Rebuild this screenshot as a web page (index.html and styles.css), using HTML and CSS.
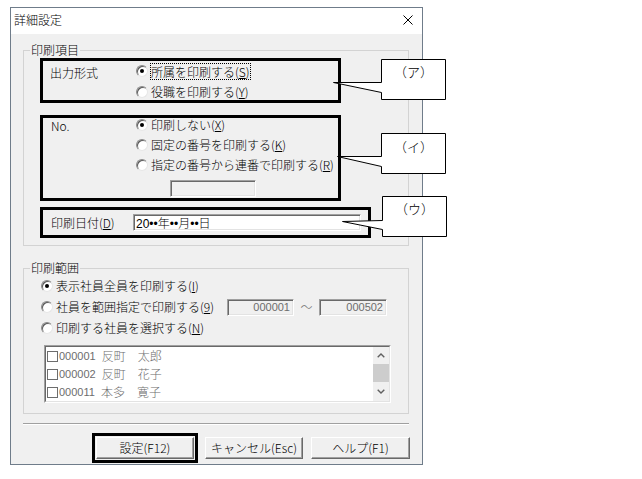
FILE: index.html
```html
<!DOCTYPE html>
<html lang="ja">
<head>
<meta charset="utf-8">
<title>詳細設定</title>
<link rel="stylesheet" href="styles.css">
</head>
<body>
<div class="dialog">
  <div class="titlebar">
    <span class="title">詳細設定</span>
    <svg class="close" viewBox="0 0 10 10" width="10" height="10"><path d="M0.5 0.5 L9.5 9.5 M9.5 0.5 L0.5 9.5" stroke="#000" stroke-width="1" fill="none"/></svg>
  </div>
  <div class="content">
    <div class="group g1">
      <div class="legend">印刷項目</div>
      <div class="mark box-a">
        <div class="lbl">出力形式</div>
        <div class="opts">
          <div class="radio"><span class="rb on"></span><span class="focus">所属を印刷する(<u>S</u>)</span></div>
          <div class="radio"><span class="rb"></span><span>役職を印刷する(<u>Y</u>)</span></div>
        </div>
      </div>
      <div class="mark box-i">
        <div class="lbl">No.</div>
        <div class="opts">
          <div class="radio"><span class="rb on"></span><span>印刷しない(<u>X</u>)</span></div>
          <div class="radio"><span class="rb"></span><span>固定の番号を印刷する(<u>K</u>)</span></div>
          <div class="radio"><span class="rb"></span><span>指定の番号から連番で印刷する(<u>R</u>)</span></div>
          <div class="field nofield"></div>
        </div>
      </div>
      <div class="mark box-u">
        <div class="lbl">印刷日付(<u>D</u>)</div>
        <div class="field datefield"><span class="lat">20••</span>年<span class="lat">••</span>月<span class="lat">••</span>日</div>
      </div>
    </div>

    <div class="group g2">
      <div class="legend">印刷範囲</div>
      <div class="opts range">
        <div class="radio"><span class="rb on"></span><span>表示社員全員を印刷する(<u>I</u>)</span></div>
        <div class="rangerow">
          <div class="radio wide"><span class="rb"></span><span>社員を範囲指定で印刷する(<u>9</u>)</span></div>
          <div class="field numfield f1">000001</div>
          <span class="tilde">～</span>
          <div class="field numfield f2">000502</div>
        </div>
        <div class="radio"><span class="rb"></span><span>印刷する社員を選択する(<u>N</u>)</span></div>
      </div>
      <div class="listbox">
        <div class="listbox-inner">
          <div class="items">
            <div class="item"><span class="cb"></span><span class="code">000001</span><span>反町　太郎</span></div>
            <div class="item"><span class="cb"></span><span class="code">000002</span><span>反町　花子</span></div>
            <div class="item"><span class="cb"></span><span class="code">000011</span><span>本多　寛子</span></div>
          </div>
          <div class="scroll">
            <div class="arrow up"><svg viewBox="0 0 8 5" width="8" height="5"><polyline points="0.7,4.3 4,1 7.3,4.3" fill="none" stroke="#606060" stroke-width="1.4"/></svg></div>
            <div class="thumb"></div>
            <div class="arrow down"><svg viewBox="0 0 8 5" width="8" height="5"><polyline points="0.7,0.7 4,4 7.3,0.7" fill="none" stroke="#606060" stroke-width="1.4"/></svg></div>
          </div>
        </div>
      </div>
    </div>

    <div class="sep"></div>

    <div class="buttons">
      <div class="defbox"><button class="btn b1">設定(F12)</button></div>
      <button class="btn b2">キャンセル(Esc)</button>
      <button class="btn b3">ヘルプ(F1)</button>
    </div>
  </div>
</div>

<div class="callout c-a">
  <svg viewBox="0 0 117 43" width="117" height="43"><path d="M51.5 1.5 H115.5 V41.5 H51.5 V34.5 L3.5 24.5 L51.5 24.5 Z" fill="#fff" stroke="#000" stroke-width="1"/></svg>
  <span class="ctext">（ア）</span>
</div>
<div class="callout c-i">
  <svg viewBox="0 0 117 43" width="117" height="43"><path d="M51.5 1.5 H115.5 V41.5 H51.5 V34.5 L7.5 24.5 L51.5 24.5 Z" fill="#fff" stroke="#000" stroke-width="1"/></svg>
  <span class="ctext">（イ）</span>
</div>
<div class="callout c-u">
  <svg viewBox="0 0 117 43" width="117" height="43"><path d="M51.5 1.5 H115.5 V41.5 H51.5 V34.5 L11.5 26.5 L51.5 25.5 Z" fill="#fff" stroke="#000" stroke-width="1"/></svg>
  <span class="ctext">（ウ）</span>
</div>
</body>
</html>
```

FILE: styles.css
```css
html, body {
  margin: 0;
  padding: 0;
  background: #fff;
}
body {
  position: relative;
  width: 642px;
  height: 479px;
  overflow: hidden;
  font-family: "Noto Sans CJK JP", "Noto Sans", sans-serif;
  font-size: 12px;
  font-weight: 300;
  color: #000;
}
u { text-decoration: underline; text-underline-offset: 1px; }

.dialog {
  box-sizing: border-box;
  width: 413px;
  height: 458px;
  margin: 7px 0 0 10px;
  border: 1px solid #6f7c8a;
  background: #f0f0f0;
  display: flex;
  flex-direction: column;
}
.titlebar {
  box-sizing: border-box;
  height: 26px;
  background: #fff;
  display: flex;
  align-items: center;
  justify-content: space-between;
  padding: 0 9px 2px 3px;
}
.title { line-height: 14px; }
.close { display: block; }

.content {
  padding-left: 12px;
}

.group {
  box-sizing: border-box;
  width: 386px;
  border: 1px solid #d3d3d3;
}
.g1 { margin-top: 16px; height: 196px; }
.g2 { margin-top: 22px; height: 146px; }
.legend {
  width: fit-content;
  height: 14px;
  line-height: 14px;
  margin: -8px 0 0 6px;
  padding: 0 1px;
  background: #f0f0f0;
}

.mark {
  box-sizing: border-box;
  border: 3px solid #000;
  margin-left: 16px;
  display: flex;
}
.box-a { width: 301px; height: 45px; margin-top: 1px; }
.box-i { width: 301px; height: 86px; margin-top: 12px; }
.box-u { width: 331px; height: 31px; margin-top: 6px; align-items: center; }

.lbl {
  box-sizing: border-box;
  line-height: 14px;
  white-space: nowrap;
}
.box-a .lbl { width: 93px; padding-left: 7px; margin-top: 5px; }
.box-i .lbl { width: 93px; padding-left: 8px; margin-top: 1px; }
.box-u .lbl { width: 90px; padding-left: 8px; }

.opts { display: flex; flex-direction: column; }
.box-a .opts { padding-top: 3px; gap: 7px; }
.box-i .opts { padding-top: 0; gap: 6px; }

.radio {
  display: flex;
  align-items: center;
  gap: 3px;
  height: 14px;
  line-height: 14px;
  white-space: nowrap;
}
.rangerow {
  display: flex;
  align-items: center;
  height: 14px;
  line-height: 14px;
  white-space: nowrap;
}
.rb {
  position: relative;
  box-sizing: border-box;
  flex: none;
  width: 12px;
  height: 12px;
  border-radius: 50%;
  background: #fff;
  border: 1px solid;
  border-color: #8a8a8a #e6e6e6 #e6e6e6 #8a8a8a;
  box-shadow: inset 1px 1px 0 #5a5a5a;
}
.rb.on::after {
  content: "";
  position: absolute;
  left: 3px;
  top: 3px;
  width: 4px;
  height: 4px;
  border-radius: 50%;
  background: #000;
}
.focus {
  outline: 1px dotted #000;
  outline-offset: 0;
  line-height: 15px;
}

.field {
  box-sizing: border-box;
  flex: none;
  height: 17px;
  border: 1px solid;
  border-color: #a0a0a0 #fff #fff #a0a0a0;
  box-shadow: inset 1px 1px 0 #696969, inset -1px -1px 0 #e3e3e3;
  background: #f0f0f0;
  line-height: 15px;
}
.nofield { width: 86px; margin: 2px 0 0 34px; }
.datefield {
  width: 228px;
  background: #fff;
  padding-left: 2px;
  white-space: nowrap;
}
.lat { font-family: "Liberation Sans", Arial, sans-serif; font-weight: 400; }

.range { margin: 4px 0 0 17px; gap: 7px; }
.wide { width: 186px; flex: none; }
.numfield {
  font-family: "Liberation Sans", Arial, sans-serif;
  font-weight: 400;
  font-size: 11px;
  color: #6d6d6d;
  text-align: right;
  padding-right: 3px;
}
.f1 { width: 67px; }
.f2 { width: 68px; }
.tilde {
  flex: none;
  width: 25px;
  text-align: center;
  color: #6d6d6d;
}

.listbox {
  box-sizing: border-box;
  width: 347px;
  height: 58px;
  margin: 10px 0 0 20px;
  border: 1px solid;
  border-color: #a0a0a0 #fff #fff #a0a0a0;
}
.listbox-inner {
  box-sizing: border-box;
  height: 56px;
  border: 1px solid;
  border-color: #696969 #e3e3e3 #e3e3e3 #696969;
  background: #fff;
  display: flex;
}
.items { flex: 1; padding-left: 1px; }
.item {
  height: 18px;
  line-height: 18px;
  display: flex;
  align-items: center;
  color: #6d6d6d;
  white-space: nowrap;
}
.cb {
  box-sizing: border-box;
  width: 11px;
  height: 11px;
  border: 1px solid #6d6d6d;
  margin-right: 1px;
}
.code {
  font-family: "Liberation Sans", Arial, sans-serif;
  font-weight: 400;
  font-size: 11px;
  margin-right: 6px;
}
.scroll {
  width: 16px;
  background: #f0f0f0;
  display: flex;
  flex-direction: column;
}
.arrow {
  display: flex;
  align-items: center;
  justify-content: center;
}
.arrow svg { display: block; }
.up { height: 17px; }
.thumb { height: 18px; background: #cdcdcd; }
.down { flex: 1; }

.sep {
  width: 386px;
  margin-top: 9px;
  border-top: 1px solid #a0a0a0;
  border-bottom: 1px solid #fff;
}

.buttons {
  display: flex;
  align-items: center;
  margin: 8px 0 0 69px;
}
.defbox {
  box-sizing: border-box;
  width: 106px;
  height: 30px;
  border: 3px solid #000;
  padding: 1px;
}
.btn {
  box-sizing: border-box;
  height: 22px;
  margin: 0;
  padding: 0;
  font: inherit;
  color: #000;
  background: #f0f0f0;
  border: 1px solid;
  border-color: #fff #696969 #696969 #fff;
  box-shadow: inset -1px -1px 0 #a0a0a0;
  display: flex;
  align-items: center;
  justify-content: center;
  line-height: 14px;
}
.b1 { width: 98px; }
.b2 { width: 98px; margin-left: 7px; }
.b3 { width: 99px; margin-left: 8px; }

.callout {
  position: absolute;
  width: 117px;
  height: 43px;
}
.callout svg { position: absolute; left: 0; top: 0; display: block; }
.ctext {
  position: absolute;
  left: 51px;
  width: 65px;
  text-align: center;
  font-size: 13px;
  line-height: 14px;
  white-space: nowrap;
}
.c-a { left: 330px; top: 58px; }
.c-a .ctext { top: 7px; }
.c-i { left: 330px; top: 132px; }
.c-i .ctext { top: 8px; }
.c-u { left: 331px; top: 195px; }
.c-u .ctext { top: 7px; }
```
